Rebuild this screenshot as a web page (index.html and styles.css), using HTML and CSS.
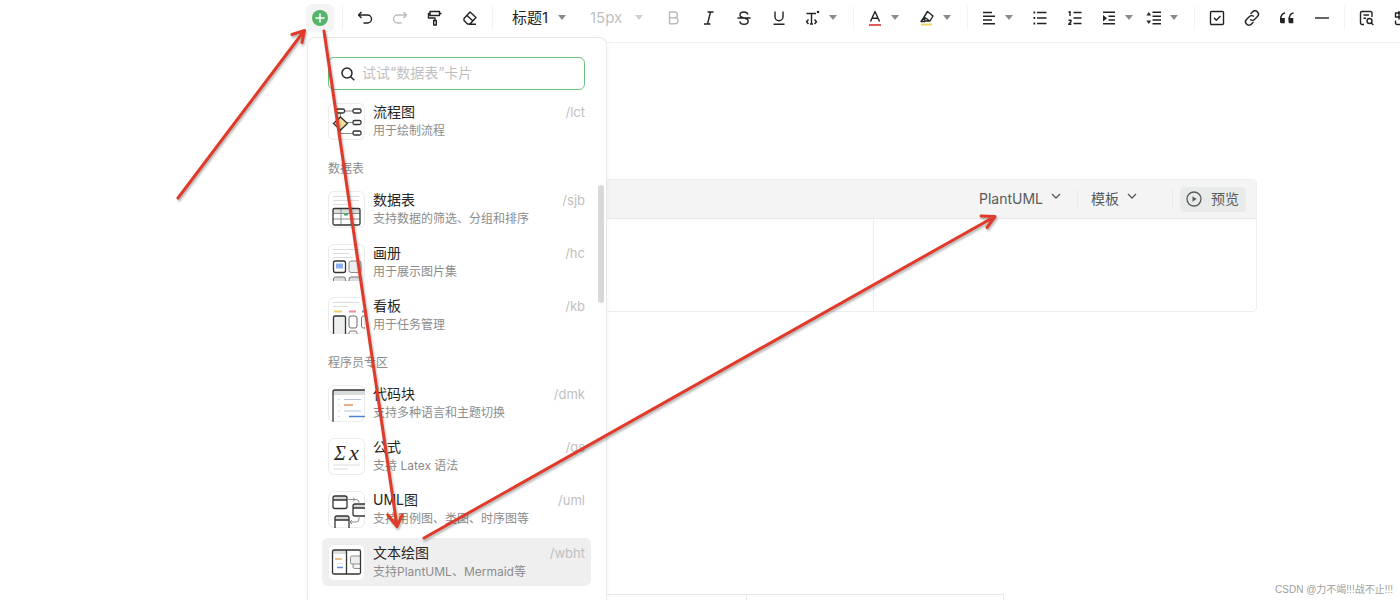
FILE: index.html
```html
<!DOCTYPE html>
<html lang="zh-CN">
<head>
<meta charset="utf-8">
<title>编辑器</title>
<link rel="stylesheet" href="styles.css">
</head>
<body>
<header class="toolbar">
  <button class="tool" aria-label="插入"><span class="add"><svg width="16" height="16" viewBox="0 0 16 16"><circle cx="8" cy="8" r="8" fill="#55b56b"/><path d="M8 4v8M4 8h8" stroke="#fff" stroke-width="1.5" stroke-linecap="round"/></svg></span></button>
  <span class="sep"></span>
  <button class="tool" aria-label="撤销"><svg class="ic" viewBox="0 0 18 18"><path d="M5.500 3 2.500 6l3 3M3 6h8.500a4 4 0 0 1 0 8H7.500"/></svg></button>
  <button class="tool tool-off" aria-label="重做"><svg class="ic" viewBox="0 0 18 18"><path d="m12.500 3 3 3-3 3M15 6H6.500a4 4 0 0 0 0 8h4"/></svg></button>
  <button class="tool" aria-label="格式刷"><svg class="ic" viewBox="0 0 18 18"><path d="M4 2.500h9.500v4H4zM4 4.500H2.500v4.500h6.500v2.500M13.500 4.500h2M7.700 11.500h2.600v4.500H7.700z"/></svg></button>
  <button class="tool" aria-label="清除格式"><svg class="ic" viewBox="0 0 18 18"><path d="m3 9.500 6-6.500 6 5.500-6 6.500H6.500L3 11.500zM6 6.500l6 5.500M8 15.200h7"/></svg></button>
  <span class="sep"></span>
  <button class="pick">标题1 <svg class="caret" viewBox="0 0 8 5"><path d="M0 0h8L4 5z"/></svg></button>
  <button class="pick pick-off">15px <svg class="caret" viewBox="0 0 8 5"><path d="M0 0h8L4 5z"/></svg></button>
  <button class="tool tool-off" aria-label="粗体"><svg class="ic" viewBox="0 0 18 18"><path d="M4.500 3h5a2.800 2.800 0 0 1 0 5.800h-5zM4.500 8.800h5.500a3 3 0 0 1 0 6H4.500z"/></svg></button>
  <button class="tool" aria-label="斜体"><svg class="ic" viewBox="0 0 18 18"><path d="M7.500 3h6M4 15h6.500M10.500 3l-3 12"/></svg></button>
  <button class="tool" aria-label="删除线"><svg class="ic" viewBox="0 0 18 18"><path d="M13 5.500C12.500 4 11 3 9 3 6.500 3 5 4.300 5 6c0 4 8.200 2 8.200 6 0 2-1.700 3.300-4.200 3.300-2.300 0-3.900-1-4.300-3M2.500 9h13"/></svg></button>
  <button class="tool" aria-label="下划线"><svg class="ic" viewBox="0 0 18 18"><path d="M5 2.500v5.200a4 4 0 0 0 8 0V2.500M3.500 15.300h11"/></svg></button>
  <button class="tool-menu" aria-label="更多文本样式"><svg class="ic" viewBox="0 0 18 18"><path d="M2.500 4.500h9.500M7.500 4.500v10.500M4.500 10.500 2.500 12.700l2 2.300M10.500 10.500l2 2.200-2 2.300M6 15h3"/><circle cx="14" cy="3" r=".6"/></svg><svg class="caret" viewBox="0 0 8 5"><path d="M0 0h8L4 5z"/></svg></button>
  <span class="sep"></span>
  <button class="tool-menu" aria-label="字体颜色"><svg class="ic" viewBox="0 0 18 18"><path d="M4.500 12.500 9 2.500l4.500 10M6 9.300h6"/><path d="M3 16h12" stroke="#df5a5f" stroke-width="2"/></svg><svg class="caret" viewBox="0 0 8 5"><path d="M0 0h8L4 5z"/></svg></button>
  <button class="tool-menu" aria-label="背景颜色"><svg class="ic" viewBox="0 0 18 18"><path d="m9.500 2.500 5.500 4.500-3 5H7L6 8zM7 8.500l4 3M6 8.500 3 12.500h4"/><path d="M3 15.500h11" stroke="#f1d55c" stroke-width="2"/></svg><svg class="caret" viewBox="0 0 8 5"><path d="M0 0h8L4 5z"/></svg></button>
  <span class="sep"></span>
  <button class="tool-menu tool-menu-mid" aria-label="对齐"><svg class="ic" viewBox="0 0 18 18"><path d="M3 3.500h9M3 7.200h12M3 11h9M3 14.700h12"/></svg><svg class="caret" viewBox="0 0 8 5"><path d="M0 0h8L4 5z"/></svg></button>
  <button class="tool" aria-label="无序列表"><svg class="ic" viewBox="0 0 18 18"><path d="M6 3.500h9.500M6 9h9.500M6 14.500h9.500"/><path d="M2.500 3.500h1.700M2.500 9h1.700M2.500 14.500h1.700" stroke-width="1.800"/></svg></button>
  <button class="tool" aria-label="有序列表"><svg class="ic" viewBox="0 0 18 18"><path d="M7.500 3.500h8M7.500 9h8M7.500 14.500h8M2.500 3.300 4 2.500v4.500M2.500 11.300h2.500v1.500L2.700 15.300h2.700"/></svg></button>
  <button class="tool-menu tool-menu-slim" aria-label="缩进"><svg class="ic" viewBox="0 0 18 18"><path d="M3 3.300h12M8.500 7.200H15M8.500 11H15M3 14.800h12"/><path d="M3 6v6.500l4-3.300z" fill="#222" stroke="none"/></svg><svg class="caret" viewBox="0 0 8 5"><path d="M0 0h8L4 5z"/></svg></button>
  <button class="tool-menu" aria-label="行高"><svg class="ic" viewBox="0 0 18 18"><path d="M7.500 3.300H16M7.500 7.200H16M7.500 11H16M7.500 14.800H16"/><path d="m1.500 6.500 2.300-3.500 2.300 3.500zM1.500 11.500l2.300 3.500 2.300-3.500z" fill="#222" stroke="none"/></svg><svg class="caret" viewBox="0 0 8 5"><path d="M0 0h8L4 5z"/></svg></button>
  <span class="sep"></span>
  <button class="tool" aria-label="任务"><svg class="ic" viewBox="0 0 18 18"><rect x="2.500" y="2.500" width="13" height="13" rx="1"/><path d="m6 8.800 2.300 2.400L12.500 7"/></svg></button>
  <button class="tool" aria-label="链接"><svg class="ic" viewBox="0 0 18 18"><path d="m7.500 5 2-2a3.200 3.200 0 0 1 5 0 3.200 3.200 0 0 1 0 4.500l-3 3a3 3 0 0 1-4.300 0M10.500 13l-2 2a3.200 3.200 0 0 1-5 0 3.200 3.200 0 0 1 0-4.500l3-3a3 3 0 0 1 4.300 0"/></svg></button>
  <button class="tool" aria-label="引用"><svg class="ic" viewBox="0 0 18 18"><path d="M7 4C4 4.500 2.700 7 2.700 10.500M15.500 4c-3 .5-4.300 3-4.300 6.500"/><path d="M2 9h4.800v5.200H3.500A1.500 1.500 0 0 1 2 12.700zM10.500 9h4.800v5.200H12a1.500 1.500 0 0 1-1.500-1.500z" fill="#222" stroke="none"/></svg></button>
  <button class="tool" aria-label="分割线"><svg class="ic" viewBox="0 0 18 18"><path d="M2 9h14"/></svg></button>
  <span class="sep"></span>
  <button class="tool" aria-label="查找"><svg class="ic" viewBox="0 0 18 18"><path d="M6 15.500H4A1.500 1.500 0 0 1 2.500 14V4A1.500 1.500 0 0 1 4 2.500h8.500A1.500 1.500 0 0 1 14 4v4M5.500 6H11M5.500 9.200H8"/><circle cx="11.500" cy="12" r="2.500"/><path d="m13.300 14 2 2"/></svg></button>
  <button class="tool" aria-label="翻译"><svg class="ic" viewBox="0 0 18 18"><path d="M2.500 4h7v4h-7zM6 2v8.500M2.500 11.500V14A1.500 1.500 0 0 0 4 15.500h3M10 15l2.500-6 2.500 6"/></svg></button>
</header>

<main class="doc">
  <section class="card">
    <div class="card-bar">
      <button class="card-pick">PlantUML <svg class="chev" viewBox="0 0 10 6"><path d="m1 1 4 4 4-4"/></svg></button>
      <span class="card-sep"></span>
      <button class="card-pick">模板 <svg class="chev" viewBox="0 0 10 6"><path d="m1 1 4 4 4-4"/></svg></button>
      <span class="card-sep card-sep-last"></span>
      <button class="preview"><svg width="16" height="16" viewBox="0 0 16 16"><circle cx="8" cy="8" r="7" fill="none" stroke="#585a5a" stroke-width="1.300"/><path d="M6.500 5.300v5.400L10.500 8z" fill="#585a5a"/></svg>预览</button>
    </div>
    <div class="card-body"><div class="pane"></div><div class="pane"></div></div>
  </section>
  <table class="grid"><tbody><tr><td></td><td></td></tr></tbody></table>
</main>

<aside class="menu">
  <label class="search">
    <svg width="16" height="16" viewBox="0 0 16 16"><circle cx="7" cy="7" r="5"/><path d="m10.700 10.700 3.600 3.600"/></svg>
    <input type="text" placeholder="试试“数据表”卡片" aria-label="搜索卡片">
  </label>
  <div class="list">
    <button class="item">
      <svg class="thumb" viewBox="0 0 37 37"><path class="g" d="M16 8h9M19 19.500h6M12.500 10v4M12.500 26v4.500H25"/><path d="m12.500 14 7 6.500-7 6.500-7-6.500z" fill="#f4dc9c" class="k"/><g class="k"><rect x="8.500" y="6" width="8" height="4" rx="1.500"/><rect x="25" y="6" width="8" height="4" rx="1.500"/><rect x="25" y="17.500" width="8" height="4" rx="1.500"/><rect x="25" y="28" width="8" height="4" rx="1.500"/></g></svg>
      <span class="text"><span class="name">流程图</span><span class="desc">用于绘制流程</span></span><span class="key">/lct</span>
    </button>
    <h2 class="group">数据表</h2>
    <button class="item">
      <svg class="thumb" viewBox="0 0 37 37"><path class="l" d="M5 5.500h26M5 9.500h26M5 13.500h14"/><path d="M5 17h27v5H5z" fill="#dcdede"/><path class="g" d="M5 22.500h27M5 28h27M13 17v17M23 17v17"/><path d="M16 23.500h4" stroke="#3fae6c" stroke-width="2"/><rect class="k" x="5" y="17.500" width="27" height="16.500" rx="1.500"/></svg>
      <span class="text"><span class="name">数据表</span><span class="desc">支持数据的筛选、分组和排序</span></span><span class="key">/sjb</span>
    </button>
    <button class="item">
      <svg class="thumb" viewBox="0 0 37 37"><path class="l" d="M5 5.500h26M5 9.500h16M5 13.500h20"/><rect class="k" x="5.500" y="17" width="12" height="11.500" rx="2"/><path d="M8 19.500h7v5H8z" fill="#8bb0f0"/><rect class="g" x="21" y="17" width="12" height="11.500" rx="2" fill="#eee"/><path d="M5.500 37v-2a2 2 0 0 1 2-2h8a2 2 0 0 1 2 2v2M21 37v-2a2 2 0 0 1 2-2h8a2 2 0 0 1 2 2v2" fill="#ddd" stroke="#777"/></svg>
      <span class="text"><span class="name">画册</span><span class="desc">用于展示图片集</span></span><span class="key">/hc</span>
    </button>
    <button class="item">
      <svg class="thumb" viewBox="0 0 37 37"><path class="l" d="M5 5.500h26M5 9.500h15"/><path d="M6 14.500h8" stroke="#ecd163" stroke-width="2"/><path d="M21 14.500h7" stroke="#ee8b9d" stroke-width="2"/><path d="M34 14.500h3" stroke="#8b8be0" stroke-width="2"/><path class="k" d="M5.500 37V20.500a1.500 1.500 0 0 1 1.500-1.500h9a1.500 1.500 0 0 1 1.500 1.500V37" fill="#eef0f0"/><rect x="21" y="19" width="8" height="12" rx="2" fill="none" stroke="#666"/><path d="M37 19h-1.500a2 2 0 0 0-2 2v8a2 2 0 0 0 2 2H37M21 37v-1a2 2 0 0 1 2-2h4a2 2 0 0 1 2 2v1" fill="none" stroke="#777"/></svg>
      <span class="text"><span class="name">看板</span><span class="desc">用于任务管理</span></span><span class="key">/kb</span>
    </button>
    <h2 class="group">程序员专区</h2>
    <button class="item">
      <svg class="thumb" viewBox="0 0 37 37"><path d="M5 5h32v5H5z" fill="#d9dbdb"/><path class="k" d="M5 37V6.500A1.500 1.500 0 0 1 6.500 5H37"/><path class="l" d="M10 14.500h2M10 20h2M10 26h2M10 31.500h2"/><path d="M16 14.500h17M16 26h17" stroke="#b4c4d6"/><path d="M16 20h9" stroke="#e7935f" stroke-width="1.500"/><path d="M21 31.500h16" stroke="#4c82cf" stroke-width="1.300"/></svg>
      <span class="text"><span class="name">代码块</span><span class="desc">支持多种语言和主题切换</span></span><span class="key">/dmk</span>
    </button>
    <button class="item">
      <svg class="thumb" viewBox="0 0 37 37"><text x="6" y="22" class="sum">Σ</text><text x="21" y="22" class="var">x</text><path class="l" d="M5 27h27M5 31h15"/></svg>
      <span class="text"><span class="name">公式</span><span class="desc">支持 Latex 语法</span></span><span class="key">/gs</span>
    </button>
    <button class="item">
      <svg class="thumb" viewBox="0 0 37 37"><path d="M5 5h14v4H5zM25 13h12v4H25zM7 25h14v4H7z" fill="#d5d7d7"/><path class="k" d="M5 9h14M25 17h12M7 29h14"/><rect class="k" x="5" y="5" width="14" height="12.500" rx="2"/><path class="k" d="M37 13H27a2 2 0 0 0-2 2v8a2 2 0 0 0 2 2h10M7 37V27a2 2 0 0 1 2-2h10a2 2 0 0 1 2 2v10"/><path class="g" d="M19 8.500h9a3 3 0 0 1 3 3V13M25 6.500l2 2-2 2M31 25v3a3 3 0 0 1-3 3h-6M24 29l-2 2 2 2"/></svg>
      <span class="text"><span class="name">UML图</span><span class="desc">支持用例图、类图、时序图等</span></span><span class="key">/uml</span>
    </button>
    <button class="item item-on">
      <svg class="thumb" viewBox="0 0 37 37"><path d="M4 6h14v4H4z" fill="#dcdede"/><path class="g" d="M33 12h-9a1.500 1.500 0 0 0-1.500 1.500v5A1.500 1.500 0 0 0 24 20h9M25 20v3a1.500 1.500 0 0 0 1.500 1.500H33" fill="#eee"/><rect class="k" x="4.500" y="6" width="28" height="24" rx="1.500"/><path class="k" d="M18.500 6v24"/><path d="M7 15h7" stroke="#e9a86c" stroke-width="1.500"/><path class="l" d="M9 19.500h6"/><path d="M9 23.500h6" stroke="#5b8fe8" stroke-width="1.500"/></svg>
      <span class="text"><span class="name">文本绘图</span><span class="desc">支持PlantUML、Mermaid等</span></span><span class="key">/wbht</span>
    </button>
  </div>
  <span class="thumb-bar"></span>
</aside>

<svg class="marks" viewBox="0 0 1400 600" aria-hidden="true">
  <path d="M178 198 304 31M292 34.500l12.500-4-2.500 12"/>
  <path d="m324 31 73 495M388 515l9 11.500 5-11.500"/>
  <path d="m424 538 570-321M981 216l14 .5-8 11"/>
</svg>
<p class="credit">CSDN @力不竭!!!战不止!!!</p>
</body>
</html>
```

FILE: styles.css
```css
* { box-sizing: border-box; }
body {
  margin: 0;
  height: 100vh;
  position: relative;
  overflow: hidden;
  background: #fff;
  color: #262626;
  font: 14px/20px Inter, "Noto Sans CJK SC", sans-serif;
}
button {
  font: inherit;
  color: inherit;
  background: none;
  border: 0;
  padding: 0;
  margin: 0;
  text-align: left;
}
svg { flex: none; }

/* toolbar */
.toolbar {
  display: flex;
  align-items: center;
  height: 42px;
  margin-left: 302px;
  padding-bottom: 7px;
  overflow: hidden;
}
.tool {
  flex: none;
  width: 35px;
  height: 28px;
  display: flex;
  align-items: center;
  justify-content: center;
}
.tool-off { opacity: 0.3; }
.add {
  width: 28px;
  height: 28px;
  border-radius: 6px;
  background: #f3f4f4;
  display: flex;
  align-items: center;
  justify-content: center;
}
.ic {
  width: 18px;
  height: 18px;
  fill: none;
  stroke: #222;
  stroke-width: 1.4;
  stroke-linejoin: round;
}
.caret { width: 8px; height: 5px; fill: #8a8a8a; }
.sep {
  flex: none;
  width: 10px;
  height: 24px;
  background: linear-gradient(#f3f3f3, #f3f3f3) center / 1px 100% no-repeat;
}
.tool-menu {
  flex: none;
  width: 52px;
  height: 28px;
  padding-left: 8px;
  display: flex;
  align-items: center;
  gap: 7px;
}
.tool-menu-mid { width: 50px; }
.tool-menu-slim { width: 45px; }
.pick {
  flex: none;
  width: 80px;
  padding: 0 11px 0 15px;
  font-size: 15px;
  display: flex;
  align-items: center;
  justify-content: space-between;
}
.pick-off { width: 79px; padding-left: 13px; padding-right: 13px; color: #bfbfbf; }
.pick-off .caret { fill: #cfcfcf; }

/* document */
.doc {
  margin-left: 489px;
  padding: 136px 143px 0 0;
  border-top: 1px solid #f0f0f0;
}
.card {
  border: 1px solid #eeeeee;
  border-radius: 4px;
  overflow: hidden;
}
.card-bar {
  height: 39px;
  padding-right: 10px;
  background: #f4f4f4;
  border-bottom: 1px solid #e9e9e9;
  color: #585a5a;
  display: flex;
  align-items: center;
  justify-content: flex-end;
}
.card-pick { display: flex; align-items: center; gap: 8px; }
.chev {
  width: 10px;
  height: 6px;
  margin-bottom: 6px;
  fill: none;
  stroke: #585a5a;
  stroke-width: 1.3;
}
.card-sep { width: 1px; height: 18px; margin: 0 13px 0 16px; background: #e9e9e9; }
.card-sep-last { margin: 0 7px 0 35px; }
.preview {
  height: 25px;
  padding: 0 7px 0 6px;
  border-radius: 4px;
  background: #e9eaea;
  display: flex;
  align-items: center;
  gap: 9px;
}
.card-body { display: grid; grid-template-columns: 1fr 1fr; }
.pane { min-height: 92px; }
.pane + .pane { border-left: 1px solid #eeeeee; }
.grid {
  width: 67%;
  margin-top: 282px;
  border-collapse: collapse;
}
.grid td { height: 34px; border: 1px solid #e8e8e8; }

/* insert menu */
.menu {
  position: absolute;
  top: 37px;
  bottom: 0;
  left: 307px;
  width: 300px;
  padding: 19px 15px 0 14px;
  background: #fff;
  border: 1px solid #e9e9e9;
  border-bottom: 0;
  border-radius: 8px 8px 0 0;
  box-shadow: 0 2px 6px rgba(0, 0, 0, 0.04);
}
.search {
  height: 33px;
  margin: 0 6px 7px;
  padding: 0 11px;
  border: 1px solid #6cc084;
  border-radius: 6px;
  display: flex;
  align-items: center;
  gap: 6px;
}
.search svg { fill: none; stroke: #262626; stroke-width: 1.5; }
.search input {
  flex: 1;
  min-width: 0;
  height: 20px;
  margin-bottom: 2px;
  padding: 0;
  border: 0;
  outline: 0;
  background: none;
  font: inherit;
}
.search input::placeholder { color: #bfbfbf; opacity: 1; }
.list { display: flex; flex-direction: column; }
.item {
  width: 100%;
  height: 48px;
  padding: 0 6px;
  border-radius: 6px;
  display: flex;
  align-items: center;
  gap: 8px;
}
.item + .item { margin-top: 5px; }
.item-on { background: #efefef; }
.thumb {
  width: 37px;
  height: 37px;
  border-radius: 6px;
  background: #fff;
  box-shadow: inset 0 0 0 1px #ececec;
  fill: none;
}
.k { stroke: #333; stroke-width: 1.3; }
.g { stroke: #8c8c8c; }
.l { stroke: #dcdcdc; }
.sum { font: italic 20px "Liberation Serif", serif; fill: #262626; }
.var { font: italic 22px "Liberation Serif", serif; fill: #262626; }
.text { flex: 1; display: flex; flex-direction: column; white-space: nowrap; }
.name { line-height: 20px; }
.desc { font-size: 12px; line-height: 18px; color: #8c8c8c; }
.key { align-self: flex-start; padding-top: 5px; font-size: 13px; color: #bfbfbf; }
.group {
  margin: 0;
  padding: 14px 6px 5px;
  font-size: 12px;
  font-weight: normal;
  line-height: 20px;
  color: #8c8c8c;
}
.group + .item { margin-top: 1px; }
.thumb-bar {
  position: absolute;
  top: 147px;
  right: 2px;
  width: 6px;
  height: 118px;
  border-radius: 3px;
  background: #d8d8d8;
}

/* annotations */
.marks {
  position: absolute;
  top: 0;
  left: 0;
  width: 1400px;
  height: 600px;
  pointer-events: none;
  fill: none;
  stroke: #e03a2a;
  stroke-width: 3;
  stroke-linecap: round;
  stroke-linejoin: round;
  filter: drop-shadow(1px 2px 1px rgba(0, 0, 0, 0.3));
}
.credit {
  position: absolute;
  right: 7px;
  bottom: 2px;
  margin: 0;
  font: 10px/16px "Liberation Sans", "Noto Sans CJK SC", sans-serif;
  color: #a0a0a0;
}
```
